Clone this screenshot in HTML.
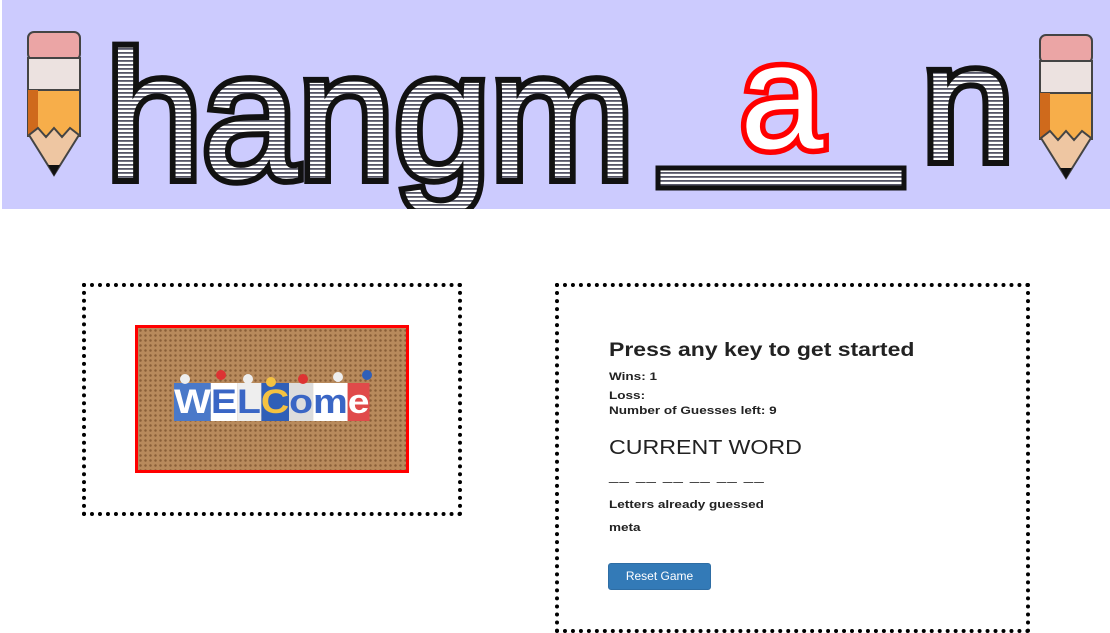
<!DOCTYPE html>
<html><head><style>
body{margin:0;width:1110px;height:631px;background:#fff;font-family:"Liberation Sans",Arial,sans-serif;color:#333;position:relative;overflow:hidden}
.banner{position:absolute;left:2px;top:0;width:1108px;height:209px;background:#cccbfe}
.box{position:absolute;border:4px dotted #000;box-sizing:border-box}
.w{position:absolute;left:609px;transform-origin:0 0;white-space:nowrap}
.t{font-weight:bold;font-size:11px;color:#222;transform:scaleX(1.23)}
</style></head><body>
<div class="banner">
<svg width="1108" height="209">
<defs><pattern id="h" width="4" height="4" patternUnits="userSpaceOnUse"><rect width="4" height="4" fill="#fff"/><rect width="4" height="1.8" fill="#556"/></pattern></defs>
<g id="p">
<rect x="26" y="32" width="52" height="28" rx="6" fill="#eba5a5" stroke="#444" stroke-width="2"/>
<rect x="26" y="58" width="52" height="32" fill="#ece2e0" stroke="#444" stroke-width="2"/>
<rect x="26" y="90" width="52" height="46" fill="#f7ae4a" stroke="#444" stroke-width="2"/>
<rect x="26" y="90" width="10" height="46" fill="#cf6a1c"/>
<path d="M27 135 L52 175 L77 135 L68 128 L60 137 L52 128 L44 137 L36 128Z" fill="#eec6a2" stroke="#444" stroke-width="2"/>
<path d="M46 165 L52 176 L58 165Z" fill="#111"/>
</g>
<use href="#p" x="1012" y="3"/>
<text x="104" y="178" font-family="Liberation Sans" font-size="180" fill="url(#h)" stroke="#111" stroke-width="12" paint-order="stroke" textLength="528" lengthAdjust="spacingAndGlyphs">hangm</text>
<text x="738" y="148" font-family="Liberation Sans" font-size="150" fill="#fff" stroke="#f00" stroke-width="11" paint-order="stroke">a</text>
<text x="920" y="160" font-family="Liberation Sans" font-size="165" fill="url(#h)" stroke="#111" stroke-width="12" paint-order="stroke">n</text>
<rect x="656" y="168" width="246" height="20" fill="url(#h)" stroke="#111" stroke-width="5"/>
</svg>
</div>
<div class="box" style="left:82px;top:283px;width:380px;height:233px"></div>
<div style="position:absolute;left:135px;top:325px;width:268px;height:142px;border:3px solid #f00;background:#b88a5c;background-image:radial-gradient(#8a5f38 1px,transparent 1.5px);background-size:5px 5px">
<div style="position:absolute;left:36px;top:55px;width:210px;white-space:nowrap;font:bold 34px 'Liberation Sans';transform:scaleX(1.15);transform-origin:0 0"><span style="background:#4a79c9;color:#fff">W</span><span style="background:#fff;color:#3a66c5">E</span><span style="background:#eee;color:#3a66c5">L</span><span style="background:#2f5fb8;color:#f4c242">C</span><span style="background:#ddd;color:#3a66c5">o</span><span style="background:#fff;color:#3a66c5">m</span><span style="background:#e04a4a;color:#fff">e</span></div>
<div style="position:absolute;left:42px;top:46px;width:10px;height:10px;border-radius:50%;background:#eee"></div>
<div style="position:absolute;left:78px;top:42px;width:10px;height:10px;border-radius:50%;background:#d33"></div>
<div style="position:absolute;left:105px;top:46px;width:10px;height:10px;border-radius:50%;background:#eee"></div>
<div style="position:absolute;left:128px;top:49px;width:10px;height:10px;border-radius:50%;background:#f4c242"></div>
<div style="position:absolute;left:160px;top:46px;width:10px;height:10px;border-radius:50%;background:#d33"></div>
<div style="position:absolute;left:195px;top:44px;width:10px;height:10px;border-radius:50%;background:#eee"></div>
<div style="position:absolute;left:224px;top:42px;width:10px;height:10px;border-radius:50%;background:#2f5fb8"></div>
</div>
<div class="box" style="left:555px;top:283px;width:475px;height:350px"></div>
<div class="w" style="top:340px;font-weight:bold;font-size:19px;color:#222;transform:scaleX(1.21)">Press any key to get started</div>
<div class="w t" style="top:371px">Wins: 1</div>
<div class="w t" style="top:390px">Loss:</div>
<div class="w t" style="top:405px">Number of Guesses left: 9</div>
<div class="w" style="top:437px;font-size:20px;color:#222;transform:scaleX(1.16)">CURRENT WORD</div>
<div class="w" style="top:467px;font-size:14px;color:#333;letter-spacing:1px;transform:scaleX(1.2)">__ __ __ __ __ __</div>
<div class="w t" style="top:499px">Letters already guessed</div>
<div class="w t" style="top:522px">meta</div>
<div style="position:absolute;left:608px;top:563px;width:101px;height:25px;background:#337ab7;border:1px solid #2e6da4;border-radius:3px;color:#fff;font-size:12px;line-height:25px;text-align:center">Reset Game</div>
</body></html>
